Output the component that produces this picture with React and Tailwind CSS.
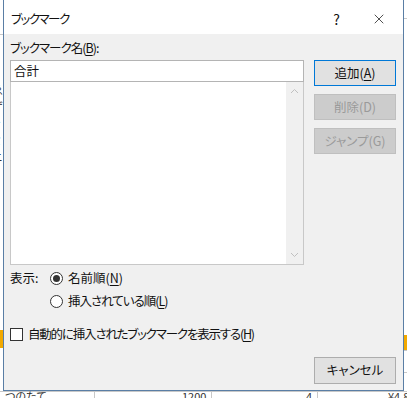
import { X } from 'lucide-react';

const font = { fontFamily: '"Noto Sans CJK JP", "Noto Sans", sans-serif' };

function U({ children }) {
  return <span className="underline underline-offset-2">{children}</span>;
}

function Button({ children, primary, disabled, className = '' }) {
  return (
    <div
      className={`flex h-[26px] w-[82px] items-center justify-center border text-[12.5px] ${
        primary
          ? 'border-[#0078d7] bg-[#e1e1e1] text-[#111]'
          : disabled
            ? 'border-[#bfbfbf] bg-[#cccccc] text-[#9a9a9a]'
            : 'border-[#adadad] bg-[#e1e1e1] text-[#111]'
      } ${className}`}
    >
      {children}
    </div>
  );
}

function Radio({ checked, tight, children }) {
  return (
    <div className="flex h-[18px] items-center">
      <span className="flex h-[13px] w-[13px] items-center justify-center rounded-full border border-[#333] bg-white">
        {checked && <span className="h-[7px] w-[7px] rounded-full bg-[#333]" />}
      </span>
      <span className={`ml-[5px] text-[12.5px] text-[#111] ${tight ? 'tracking-[-1px]' : ''}`}>{children}</span>
    </div>
  );
}

function Sheet() {
  return (
    <div className="absolute inset-0 bg-white text-[11px] text-[#333]">
      <div className="absolute left-0 top-[330px] h-[18px] w-[4px] bg-[#f2a900]" />
      <div className="absolute right-0 top-[335px] h-[15px] w-[4px] bg-[#f2a900]" />
      <div className="absolute left-0 top-[34px] h-[1px] w-[4px] bg-[#c8c8c8]" />
      <div className="absolute right-0 top-[18px] h-[1px] w-[4px] bg-[#c8c8c8]" />
      <div className="absolute right-0 top-[350px] h-[1px] w-[4px] bg-[#c8c8c8]" />
      <div className="absolute right-0 top-[372px] h-[1px] w-[4px] bg-[#c8c8c8]" />
      <div className="absolute left-[-8px] top-[84px] flex flex-col gap-[6px] leading-none">
        <span>ゑ</span>
        <span>ゲ</span>
        <span>ぐ</span>
        <span>ミ</span>
        <span>ニ</span>
      </div>
      <div className="absolute left-0 top-[391px] flex h-[7px] w-full border-t border-[#c8c8c8] leading-[14px]">
        <span className="absolute left-[5px] top-[-3px]">つのたて</span>
        <span className="absolute left-[94px] top-0 h-full w-px bg-[#c8c8c8]" />
        <span className="absolute left-[182px] top-[-3px]">1200</span>
        <span className="absolute left-[211px] top-0 h-full w-px bg-[#c8c8c8]" />
        <span className="absolute left-[306px] top-[-3px]">4</span>
        <span className="absolute left-[317px] top-0 h-full w-px bg-[#c8c8c8]" />
        <span className="absolute left-[388px] top-[-3px]">¥4,8</span>
      </div>
    </div>
  );
}

export default function App() {
  return (
    <div className="relative h-[398px] w-[407px] overflow-hidden [font-feature-settings:'palt']" style={font}>
      <Sheet />
      <div className="absolute left-[3px] top-[-1px] flex h-[392px] w-[401px] flex-col border border-[#5a7ea5] bg-[#f0f0f0]">
        <div className="flex h-[34px] shrink-0 items-center bg-white pl-[7px] pt-[4px]">
          <span className="text-[12.5px] tracking-[-1.5px] text-[#111]">ブックマーク</span>
          <span className="ml-auto text-[14px] text-[#111]">?</span>
          <X size={16} strokeWidth={1.1} className="ml-[31px] mr-[16px] text-[#111]" />
        </div>
        <div className="flex flex-1 flex-col pl-[6px] pr-[7px] pt-[6px] pb-[6px]">
          <div className="flex">
            <div className="flex w-[294px] flex-col">
              <div className="h-[16px] text-[12.5px] leading-[16px] tracking-[-1px] text-[#111]">
                ブックマーク名(<U>B</U>):
              </div>
              <div className="mt-[4px] flex h-[22px] items-center border border-[#b4b4b4] bg-white pl-[3px] text-[12.5px] text-[#111]">
                合計
              </div>
              <div className="flex h-[183px] border border-t-0 border-[#c8c8c8] bg-white">
                <div className="flex-1" />
                <div className="flex w-[17px] flex-col items-center justify-between bg-[#f0f0f0] py-[6px] text-[#c0c0c0]">
                  <svg width="9" height="6" viewBox="0 0 9 6" fill="none" stroke="currentColor" strokeWidth="1">
                    <path d="M1 5 L4.5 1.5 L8 5" />
                  </svg>
                  <svg width="9" height="6" viewBox="0 0 9 6" fill="none" stroke="currentColor" strokeWidth="1">
                    <path d="M1 1 L4.5 4.5 L8 1" />
                  </svg>
                </div>
              </div>
            </div>
            <div className="ml-[10px] flex flex-col gap-[8px] pt-[20px]">
              <Button primary>
                追加(<U>A</U>)
              </Button>
              <Button disabled>削除(D)</Button>
              <Button disabled>ジャンプ(G)</Button>
            </div>
          </div>
          <div className="mt-[4px] flex">
            <span className="h-[18px] w-[40px] text-[12.5px] leading-[18px] text-[#111]">表示:</span>
            <div className="flex flex-col gap-[5px]">
              <Radio checked>
                名前順(<U>N</U>)
              </Radio>
              <Radio tight>
                挿入されている順(<U>L</U>)
              </Radio>
            </div>
          </div>
          <div className="mt-[15px] flex h-[18px] items-center">
            <span className="h-[13px] w-[13px] border border-[#333] bg-white" />
            <span className="ml-[5px] text-[12.5px] tracking-[-1.2px] text-[#111]">
              自動的に挿入されたブックマークを表示する(<U>H</U>)
            </span>
          </div>
          <div className="mt-auto flex justify-end">
            <Button className="h-[27px]">キャンセル</Button>
          </div>
        </div>
      </div>
    </div>
  );
}
